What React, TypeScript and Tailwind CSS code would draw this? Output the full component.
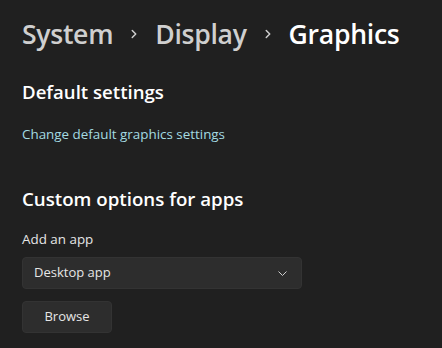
import { ChevronRight } from "lucide-react";

const font = { fontFamily: '"Segoe UI", "Open Sans", "Noto Sans", sans-serif' };

export default function App() {
  return (
    <div
      style={font}
      className="w-[442px] h-[348px] bg-[#202020] text-white overflow-hidden px-[22px] pt-[16px]"
    >
      <nav className="flex items-center text-[26.6px] font-semibold leading-[36px] tracking-[-0.3px]">
        <span className="text-[#cfcfcf]">System</span>
        <ChevronRight className="w-[14px] h-[14px] mx-[14px] text-[#cfcfcf]" strokeWidth={2.5} />
        <span className="text-[#cfcfcf]">Display</span>
        <ChevronRight className="w-[14px] h-[14px] mx-[14px] text-[#cfcfcf]" strokeWidth={2.5} />
        <span className="text-white">Graphics</span>
      </nav>

      <h2 className="mt-[27px] text-[18.6px] font-semibold leading-[26px]">Default settings</h2>
      <a className="block mt-[20px] text-[13.4px] leading-[18px] text-[#a4dbe2]">
        Change default graphics settings
      </a>

      <h2 className="mt-[43px] text-[18.7px] font-semibold leading-[26px]">Custom options for apps</h2>
      <div className="mt-[18px] text-[13.4px] leading-[18px] text-[#e6e6e6]">Add an app</div>

      <div className="mt-[9px] w-[280px] h-[32px] rounded-[4px] bg-[#2d2d2d] border border-[#333333] flex items-center justify-between pl-[11px] pr-[14px]">
        <span className="text-[13px] text-[#e6e6e6]">Desktop app</span>
        <svg width="9" height="5" viewBox="0 0 9 5" fill="none">
          <path d="M0.5 0.5 L4.5 4.5 L8.5 0.5" stroke="#cfcfcf" strokeWidth="1" />
        </svg>
      </div>

      <button className="mt-[12px] w-[90px] h-[32px] rounded-[4px] bg-[#2d2d2d] border border-[#333333] text-[13px] text-[#e6e6e6]">
        Browse
      </button>
    </div>
  );
}
